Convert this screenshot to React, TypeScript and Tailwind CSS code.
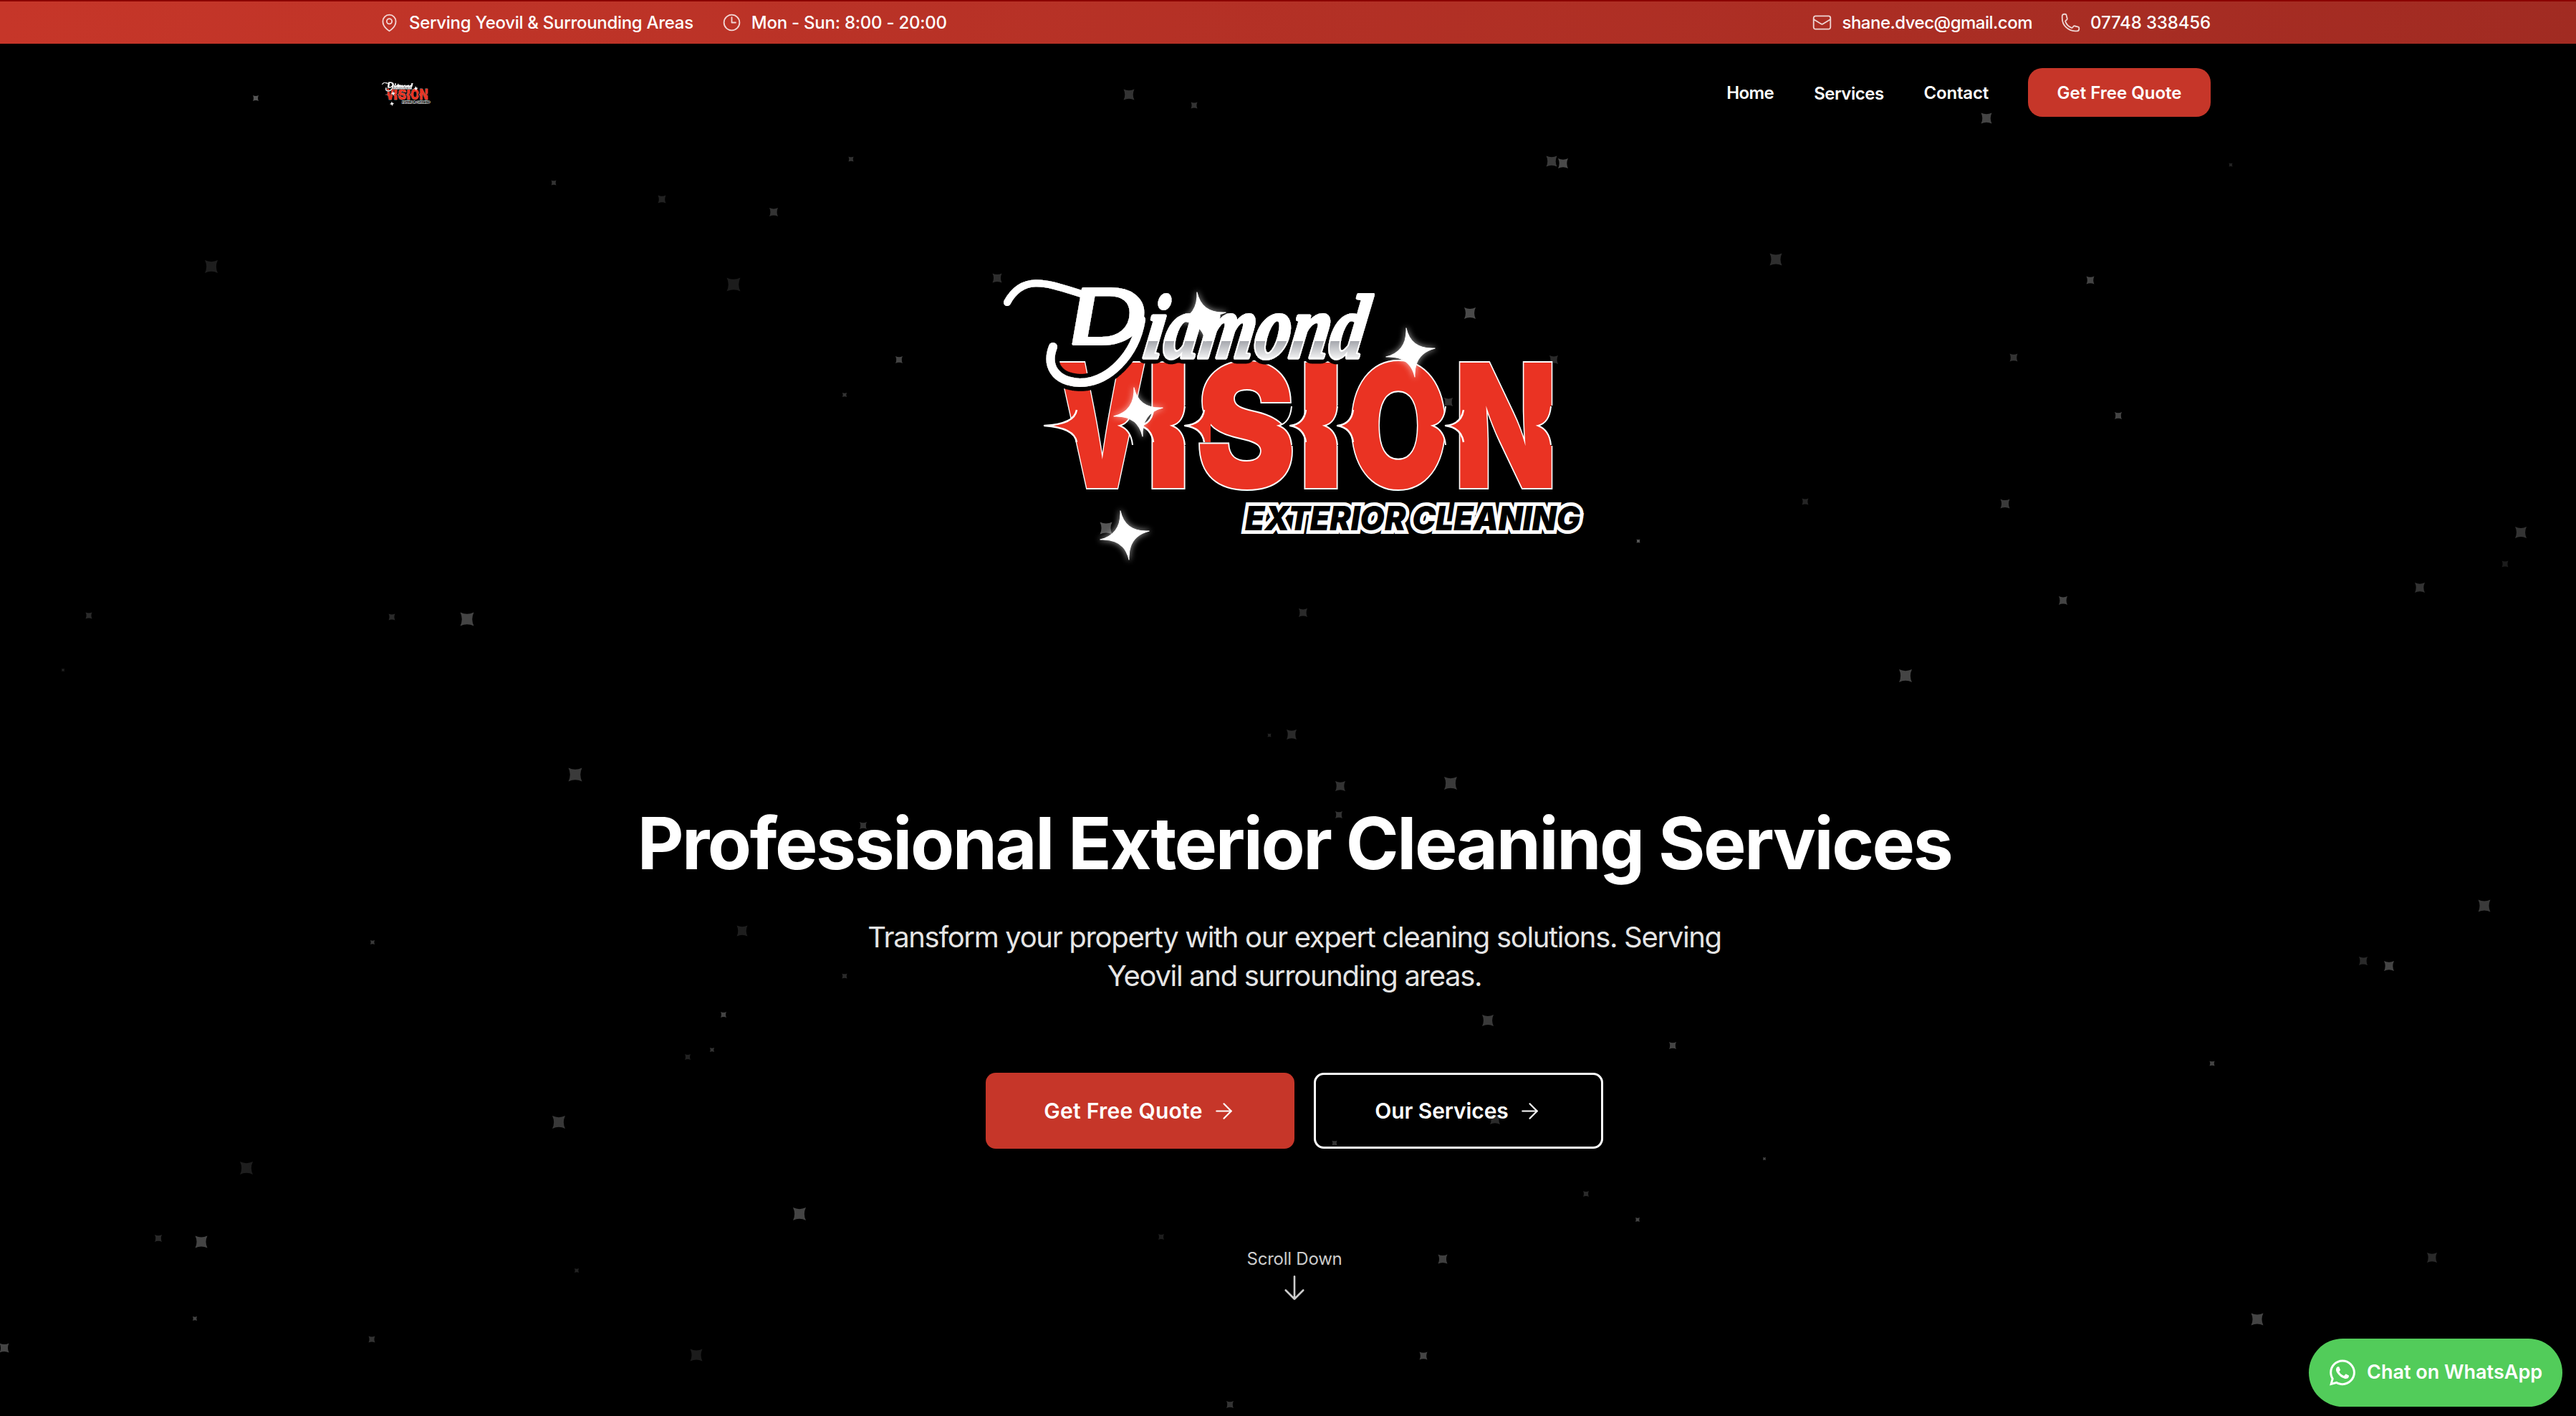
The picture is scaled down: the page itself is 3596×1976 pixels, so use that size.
import React from "react";
import { FaWhatsapp } from "react-icons/fa";

type Particle = [x: number, y: number, size: number, color: string];

const particles: Particle[] = [
  [357, 137, 8, "#555"], [773, 255, 7, "#333"], [924, 278, 11, "#222"], [1080, 296, 12, "#333"],
  [1188, 222, 7, "#333"], [295, 372, 18, "#1e1e1e"], [1024, 397, 19, "#1c1c1c"], [1392, 388, 13, "#2e2e2e"],
  [1255, 502, 10, "#444"], [1179, 551, 6, "#333"], [124, 859, 9, "#2a2a2a"], [547, 861, 9, "#2a2a2a"],
  [652, 864, 19, "#444"], [88, 935, 4, "#222"], [2773, 165, 15, "#444"], [2166, 225, 15, "#3a3a3a"],
  [2182, 228, 14, "#4a4a4a"], [3114, 230, 5, "#222"], [2479, 362, 17, "#2e2e2e"], [2918, 391, 11, "#444"],
  [2811, 499, 11, "#333"], [2957, 580, 10, "#444"], [2520, 700, 9, "#252525"], [2799, 703, 13, "#3a3a3a"],
  [2287, 755, 5, "#555"], [3519, 743, 16, "#333"], [3497, 787, 9, "#1c1c1c"], [3378, 820, 14, "#333"],
  [2880, 838, 12, "#444"], [2660, 943, 18, "#444"], [2169, 502, 12, "#2a2a2a"], [803, 1081, 19, "#3a3a3a"],
  [1205, 1152, 10, "#333"], [520, 1315, 6, "#3a3a3a"], [1036, 1299, 15, "#1e1e1e"], [1179, 1362, 7, "#2a2a2a"],
  [1010, 1416, 8, "#444"], [994, 1465, 6, "#333"], [960, 1475, 8, "#222"], [780, 1566, 18, "#383838"],
  [344, 1630, 18, "#1e1e1e"], [1116, 1694, 18, "#444"], [221, 1728, 10, "#2a2a2a"], [281, 1733, 17, "#444"],
  [805, 1773, 6, "#222"], [272, 1840, 6, "#444"], [519, 1869, 9, "#333"], [6, 1881, 13, "#444"],
  [972, 1891, 17, "#1c1c1c"], [1576, 132, 15, "#333"], [1667, 147, 9, "#333"], [2052, 437, 16, "#4a4a4a"],
  [2022, 561, 12, "#333"], [1544, 737, 17, "#555"], [1819, 855, 12, "#2a2a2a"], [1803, 1025, 14, "#2a2a2a"],
  [1772, 1026, 5, "#222"], [1871, 1097, 14, "#333"], [2025, 1093, 18, "#3a3a3a"], [1869, 1137, 10, "#333"],
  [2077, 1424, 16, "#3a3a3a"], [2335, 1459, 10, "#444"], [1863, 1595, 7, "#333"], [2087, 1562, 14, "#2a2a2a"],
  [2214, 1666, 8, "#2a2a2a"], [2286, 1702, 6, "#444"], [2463, 1617, 4, "#444"], [3088, 1484, 7, "#444"],
  [3299, 1341, 12, "#2a2a2a"], [3335, 1348, 14, "#444"], [3468, 1264, 17, "#3a3a3a"], [3395, 1755, 14, "#2a2a2a"],
  [3151, 1841, 17, "#444"], [2014, 1757, 13, "#3f3f3f"], [1621, 1726, 8, "#1e1e1e"], [1987, 1892, 11, "#444"],
  [1717, 1960, 10, "#333"],
];

function Particles() {
  return (
    <svg className="pointer-events-none absolute inset-0 h-[1976px] w-[3596px]" viewBox="0 0 3596 1976" aria-hidden="true">
      {particles.map(([x, y, size, color]) => (
        <path
          key={`${x}-${y}`}
          d="M-.5-.5Q0-.26 .5-.5Q.26 0 .5 .5Q0 .26-.5 .5Q-.26 0-.5-.5Z"
          fill={color}
          transform={`translate(${x} ${y}) scale(${size})`}
        />
      ))}
    </svg>
  );
}

type Letter = { char: string; center: number; length: number; spike: number; tip: number; notch: number };

const letters: Letter[] = [
  { char: "V", center: 1536, length: 126, spike: 1502, tip: 1456, notch: 1579 },
  { char: "I", center: 1629, length: 64, spike: 1609, tip: 1588, notch: 1652 },
  { char: "S", center: 1737, length: 140, spike: 1680, tip: 1652, notch: 1801 },
  { char: "I", center: 1842, length: 64, spike: 1822, tip: 1799, notch: 1865 },
  { char: "O", center: 1950, length: 142, spike: 1888, tip: 1865, notch: 2016 },
  { char: "N", center: 2100, length: 145, spike: 2042, tip: 2016, notch: 2163 },
];

const swash = "M1404 422C1428 378 1466 398 1520 414";
const tail = "M1591 446C1583 496 1545 534 1505 534C1470 532 1458 510 1468 484";

function Sparkle({ x, y }: { x: number; y: number }) {
  const shape = "M0-35Q1-4 35 0Q4 2 0 35Q-1 4-35 0Q-4-2 0-35Z";
  return (
    <g transform={`translate(${x} ${y}) rotate(-10)`}>
      <path d={shape} fill="#fff" stroke="#fff" strokeWidth={3} opacity={0.55} filter="url(#sparkle-glow)" />
      <path d={shape} fill="#fff" stroke="#fff" strokeWidth={1} />
    </g>
  );
}

function Logo({ className }: { className: string }) {
  return (
    <svg className={className} viewBox="1398 392 814 392" role="img" aria-label="Diamond Vision Exterior Cleaning">
      <defs>
        <linearGradient id="chrome" gradientUnits="userSpaceOnUse" x1="0" y1="400" x2="0" y2="504">
          <stop offset="0" stopColor="#fff" />
          <stop offset="0.735" stopColor="#fff" />
          <stop offset="0.735" stopColor="#a6a8ae" />
          <stop offset="1" stopColor="#fff" />
        </linearGradient>
        <filter id="sparkle-glow" x="-60%" y="-60%" width="220%" height="220%">
          <feGaussianBlur stdDeviation="4" />
        </filter>
        <filter id="halo" filterUnits="userSpaceOnUse" x="1380" y="370" width="600" height="200">
          <feGaussianBlur in="SourceAlpha" stdDeviation="3.2" result="soft" />
          <feComponentTransfer in="soft" result="wide">
            <feFuncA type="linear" slope="40" intercept="-0.6" />
          </feComponentTransfer>
          <feFlood floodColor="#000" result="ink" />
          <feComposite in="ink" in2="wide" operator="in" result="edge" />
          <feMerge>
            <feMergeNode in="edge" />
            <feMergeNode in="SourceGraphic" />
          </feMerge>
        </filter>
      </defs>

      <g
        className="fill-[#ea3323] stroke-white stroke-[4px]"
        fontFamily="Inter, sans-serif"
        fontWeight={900}
        fontSize={240}
        textAnchor="middle"
        paintOrder="stroke"
      >
        {letters.map((l, i) => (
          <text key={i} x={l.center} y={681} textLength={l.length} lengthAdjust="spacingAndGlyphs">
            {l.char}
          </text>
        ))}
      </g>
      {letters.map((l, i) => (
        <g key={i}>
          <path d={`M${l.notch + 6} 566H${l.notch}Q${l.notch - 2} 590 ${l.notch - 18} 594Q${l.notch - 2} 600 ${l.notch} 622H${l.notch + 6}Z`} fill="#000" />
          <path d={`M${l.notch} 567Q${l.notch - 2} 590 ${l.notch - 18} 594Q${l.notch - 2} 600 ${l.notch} 621`} fill="none" stroke="#fff" strokeWidth={2} />
        </g>
      ))}
      {letters.map((l, i) => (
        <g key={i}>
          <path d={`M${l.spike + 8} 572H${l.spike}Q${l.spike - 3} 592 ${l.tip} 594Q${l.spike - 3} 597 ${l.spike} 617H${l.spike + 8}Z`} fill="#ea3323" />
          <path d={`M${l.spike - 1} 572Q${l.spike - 4} 592 ${l.tip} 594Q${l.spike - 4} 597 ${l.spike - 1} 617`} fill="none" stroke="#fff" strokeWidth={2.5} strokeLinejoin="round" />
        </g>
      ))}

      <g filter="url(#halo)" strokeLinejoin="round">
        <path d={tail} fill="none" stroke="#fff" strokeWidth={12} strokeLinecap="round" />
        <path d={swash} fill="none" stroke="#fff" strokeWidth={10} strokeLinecap="round" />
        <text
          x={1490}
          y={480}
          className="fill-white stroke-white stroke-[4px]"
          fontFamily="Lato, sans-serif"
          fontStyle="italic"
          fontWeight={400}
          fontSize={106}
          textLength={108}
          lengthAdjust="spacingAndGlyphs"
        >
          D
        </text>
        <text
          transform="translate(1590 499) skewX(-9) translate(-1590 -499)"
          x={1592}
          y={499}
          className="fill-[url(#chrome)] stroke-white stroke-[5px]"
          paintOrder="stroke"
          fontFamily="'Liberation Serif', serif"
          fontStyle="italic"
          fontWeight={700}
          fontSize={126}
          textLength={308}
          lengthAdjust="spacingAndGlyphs"
        >
          iamond
        </text>
      </g>

      <Sparkle x={1675} y={442} />
      <Sparkle x={1587} y={575} />
      <Sparkle x={1568} y={747} />
      <Sparkle x={1967} y={492} />

      <text
        x={1736}
        y={740}
        className="fill-black stroke-white stroke-[10px]"
        paintOrder="stroke"
        fontFamily="Inter, sans-serif"
        fontWeight={900}
        fontStyle="italic"
        fontSize={47}
        textLength={468}
        lengthAdjust="spacingAndGlyphs"
      >
        EXTERIOR CLEANING
      </text>
    </svg>
  );
}

function OutlineIcon({ paths, className }: { paths: string[]; className: string }) {
  return (
    <svg className={className} viewBox="0 0 24 24" fill="none" stroke="currentColor" strokeWidth={1.5} strokeLinecap="round" strokeLinejoin="round" aria-hidden="true">
      {paths.map((d) => (
        <path key={d} d={d} />
      ))}
    </svg>
  );
}

const icons = {
  pin: [
    "M15 10.5a3 3 0 1 1-6 0 3 3 0 0 1 6 0Z",
    "M19.5 10.5c0 7.142-7.5 11.25-7.5 11.25S4.5 17.642 4.5 10.5a7.5 7.5 0 1 1 15 0Z",
  ],
  clock: ["M12 6v6h4.5m4.5 0a9 9 0 1 1-18 0 9 9 0 0 1 18 0Z"],
  mail: [
    "M21.75 6.75v10.5a2.25 2.25 0 0 1-2.25 2.25h-15a2.25 2.25 0 0 1-2.25-2.25V6.75m19.5 0A2.25 2.25 0 0 0 19.5 4.5h-15a2.25 2.25 0 0 0-2.25 2.25m19.5 0v.243a2.25 2.25 0 0 1-1.07 1.916l-7.5 4.615a2.25 2.25 0 0 1-2.36 0L3.32 8.91a2.25 2.25 0 0 1-1.07-1.916V6.75",
  ],
  phone: [
    "M2.25 6.75c0 8.284 6.716 15 15 15h2.25a2.25 2.25 0 0 0 2.25-2.25v-1.372c0-.516-.351-.966-.852-1.091l-4.423-1.106c-.44-.11-.902.055-1.173.417l-.97 1.293c-.282.376-.769.542-1.21.38a12.035 12.035 0 0 1-7.143-7.143c-.162-.441.004-.928.38-1.21l1.293-.97c.363-.271.527-.734.417-1.173L6.963 3.102a1.125 1.125 0 0 0-1.091-.852H4.5A2.25 2.25 0 0 0 2.25 4.5v2.25Z",
  ],
  right: ["M5 12h14", "M12 5l7 7-7 7"],
  down: ["M19 14l-7 7m0 0l-7-7m7 7V3"],
};

function ContactItem({ icon, children, tracking }: { icon: string[]; children: React.ReactNode; tracking: string }) {
  return (
    <div className="flex items-center gap-[13px]">
      <OutlineIcon paths={icon} className="size-[29px] text-white/80" />
      <span className={tracking}>{children}</span>
    </div>
  );
}

function TopBar() {
  return (
    <div className="flex h-[61px] items-center justify-between border-t-2 border-[#8b0000] bg-linear-to-r from-[#c63629] to-[#a12b22] pr-[510px] pl-[529px] text-2xl font-medium text-white">
      <div className="flex gap-[39px]">
        <ContactItem icon={icons.pin} tracking="tracking-[-0.3px]">Serving Yeovil &amp; Surrounding Areas</ContactItem>
        <ContactItem icon={icons.clock} tracking="tracking-[-0.24px]">Mon - Sun: 8:00 - 20:00</ContactItem>
      </div>
      <div className="flex gap-[39px]">
        <ContactItem icon={icons.mail} tracking="tracking-[-0.5px]">shane.dvec@gmail.com</ContactItem>
        <ContactItem icon={icons.phone} tracking="tracking-[-0.14px]">07748 338456</ContactItem>
      </div>
    </div>
  );
}

function NavBar() {
  return (
    <nav className="flex h-[136px] items-center justify-between pr-[510px] pl-[533px] text-2xl font-semibold text-white">
      <Logo className="mt-1 h-[33px] w-[68px] overflow-visible" />
      <div className="flex items-center gap-14">
        <a className="pt-px tracking-[-0.6px]">Home</a>
        <a className="pt-[3px] tracking-[-0.5px]">Services</a>
        <a className="pt-px tracking-[-0.2px]">Contact</a>
        <a className="-ml-px flex h-[68px] w-[255px] items-center justify-center rounded-[20px] bg-[#c63629] pt-px">Get Free Quote</a>
      </div>
    </nav>
  );
}

function Hero() {
  return (
    <main className="flex flex-col items-center pt-[195px] pl-[18px] text-white">
      <Logo className="h-[392px] w-[814px] overflow-visible" />
      <h1 className="mt-[343px] text-[100px] leading-none font-bold tracking-[-2.44px] whitespace-nowrap">
        Professional Exterior Cleaning Services
      </h1>
      <p className="mt-[54px] text-center text-[40px] leading-[54px] tracking-[-1.33px] whitespace-nowrap text-[#e5e5e5]">
        Transform your property with our expert cleaning solutions. Serving
        <br />
        Yeovil and surrounding areas.
      </p>
      <div className="mt-[108px] flex gap-[27px] text-[30px] font-semibold">
        <a className="flex h-[106px] w-[431px] items-center justify-center gap-3 rounded-[14px] bg-[#c63629]">
          <span className="tracking-[0.28px]">Get Free Quote</span>
          <OutlineIcon paths={icons.right} className="size-[35px]" />
        </a>
        <a className="flex h-[106px] w-[404px] items-center justify-center gap-3 rounded-[14px] border-3 border-white">
          <span className="tracking-[-0.1px]">Our Services</span>
          <OutlineIcon paths={icons.right} className="size-[35px]" />
        </a>
      </div>
      <div className="mt-[138px] flex flex-col items-center gap-[3px] text-[#ccc]">
        <span className="text-2xl tracking-[-0.24px]">Scroll Down</span>
        <OutlineIcon paths={icons.down} className="size-[42px]" />
      </div>
    </main>
  );
}

function WhatsAppButton() {
  return (
    <a className="absolute right-[19px] bottom-[13px] flex h-[95px] w-[354px] items-center gap-4 rounded-full bg-[#52cc5a] pl-[29px] text-[27px] font-semibold whitespace-nowrap text-white">
      <FaWhatsapp className="h-[41px] w-[36px]" />
      Chat on WhatsApp
    </a>
  );
}

export default function App() {
  return (
    <div className="relative h-[1976px] w-[3596px] overflow-hidden bg-black font-['Inter',sans-serif]">
      <Particles />
      <div className="relative">
        <TopBar />
        <NavBar />
        <Hero />
      </div>
      <WhatsAppButton />
    </div>
  );
}
